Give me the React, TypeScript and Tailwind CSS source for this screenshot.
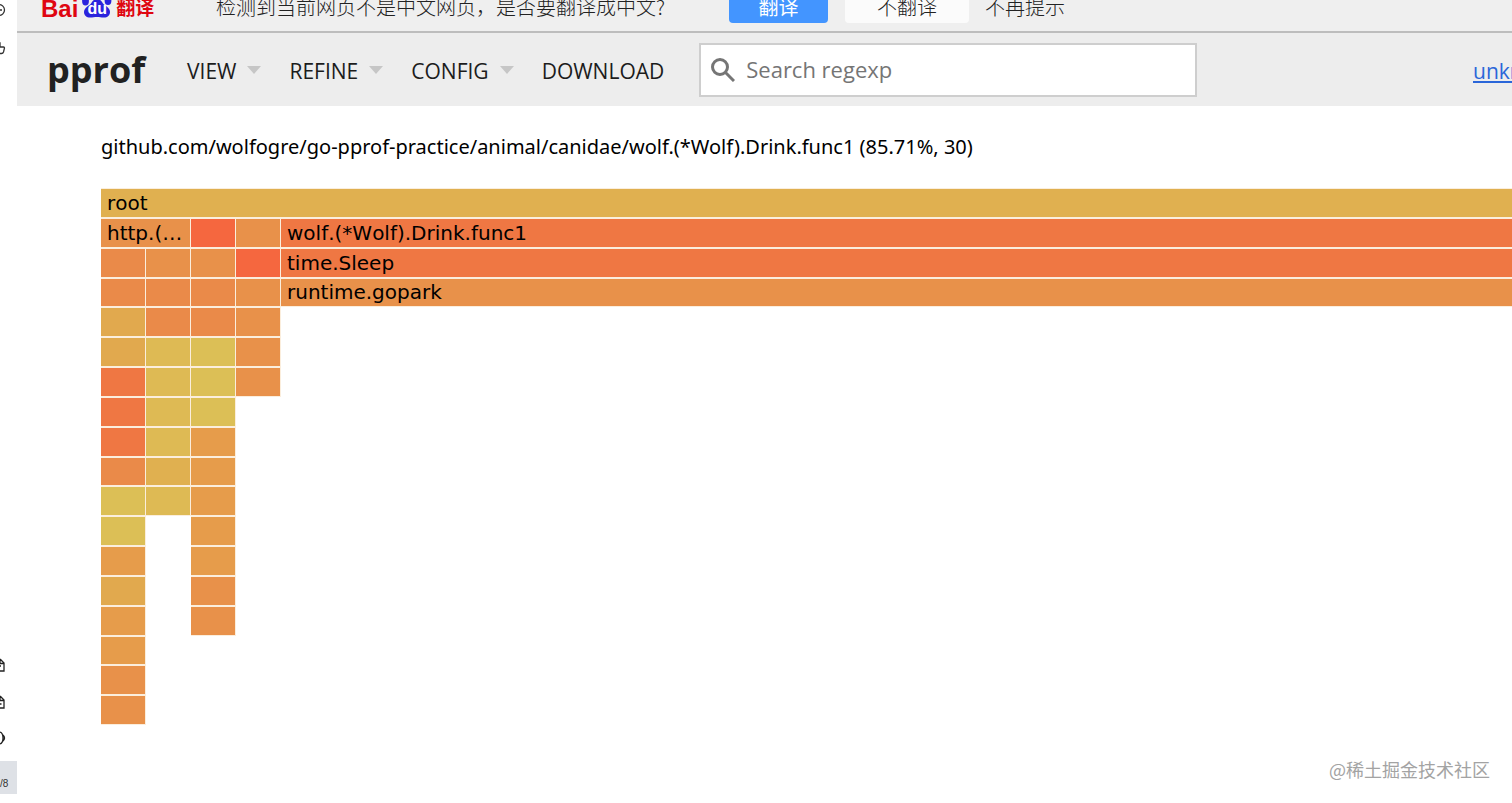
import { clsx } from "clsx";
import React from "react";

type Cell = { color: string; label?: string; span?: string } | null;

const gold = "bg-[#e0b050]";
const sand = "bg-[#e1a94e]";
const olive = "bg-[#deba54]";
const lime = "bg-[#dcbf56]";
const amber = "bg-[#e69c4b]";
const orange = "bg-[#e8914a]";
const rust = "bg-[#ea8a49]";
const coral = "bg-[#ef7743]";
const red = "bg-[#f5673f]";

const c = (color: string, label?: string, span?: string): Cell => ({
  color,
  label,
  span,
});

const stacks: Cell[][] = [
  [c(gold, "root", "col-span-5")],
  [
    c(orange, "http.(…", "col-span-2"),
    c(red),
    c(orange),
    c(coral, "wolf.(*Wolf).Drink.func1"),
  ],
  [c(rust), c(orange), c(orange), c(red), c(coral, "time.Sleep")],
  [c(rust), c(rust), c(rust), c(orange), c(orange, "runtime.gopark")],
  [c(sand), c(rust), c(rust), c(orange)],
  [c(sand), c(olive), c(lime), c(orange)],
  [c(coral), c(olive), c(lime), c(orange)],
  [c(coral), c(olive), c(lime)],
  [c(coral), c(olive), c(amber)],
  [c(rust), c(gold), c(amber)],
  [c(lime), c(olive), c(amber)],
  [c(lime), null, c(amber)],
  [c(amber), null, c(amber)],
  [c(sand), null, c(orange)],
  [c(amber), null, c(orange)],
  [c(amber)],
  [c(orange)],
  [c(orange)],
];

const FlameGraph = () => {
  return (
    <div className="-mr-px grid h-[537px] auto-rows-fr font-['DejaVu_Sans',sans-serif] text-xl text-black [font-kerning:none]">
      {stacks.map((row, i) => (
        <div key={i} className="grid grid-cols-[45px_45px_45px_45px_1fr]">
          {row.map((cell, j) =>
            cell ? (
              <div
                key={j}
                className={clsx(
                  "flex items-center overflow-hidden whitespace-nowrap border-y border-r border-[#fbeedd] px-[6px]",
                  cell.color,
                  cell.span
                )}
              >
                {cell.label}
              </div>
            ) : (
              <div key={j} />
            )
          )}
        </div>
      ))}
    </div>
  );
};

const BaiduLogo = () => {
  return (
    <div className="flex w-[175px] items-end pb-[5px] font-['Liberation_Sans','Noto_Sans_CJK_SC',sans-serif] font-bold text-[#df0611]">
      <span className="text-2xl leading-[18px]">Bai</span>
      <span className="relative ml-1 mr-1 h-7 w-[30px]">
        <svg viewBox="0 0 30 28" className="h-7 w-[30px] fill-[#2a24dd]">
          <ellipse cx="3.500" cy="11" rx="3.400" ry="4.500" />
          <ellipse cx="10.500" cy="5" rx="3.400" ry="4.500" />
          <ellipse cx="19" cy="5" rx="3.400" ry="4.500" />
          <ellipse cx="26" cy="10.500" rx="3.400" ry="4.500" />
          <path d="M15 9c-3 0-4.500 2-6 4.500C7 16 2 17.500 2 22c0 3.500 2.500 5.500 6 5.500 3 0 4.500-.5 7-.5s4 .5 7 .5c3.500 0 6-2 6-5.500 0-4.500-5-6-7-8.500C19.500 11 18 9 15 9z" />
        </svg>
        <span className="absolute inset-x-0 bottom-0 text-center text-base leading-[18px] text-white">
          du
        </span>
      </span>
      <span className="text-[19px] leading-[18px]">翻译</span>
    </div>
  );
};

const TranslateBar = () => {
  return (
    <div className="flex h-[33px] items-end overflow-hidden whitespace-nowrap border-b-2 border-[#bdbdbd] bg-[#efefef] pb-2 pl-6 font-['Noto_Sans_CJK_SC',sans-serif] text-xl leading-8 text-[#222]">
      <BaiduLogo />
      <p className="w-[513px] font-light">
        检测到当前网页不是中文网页，是否要翻译成中文?
      </p>
      <button className="h-8 w-[99px] rounded bg-[#4395ff] text-white">
        翻译
      </button>
      <button className="ml-[17px] h-8 w-[124px] rounded bg-[#fbfbfb] font-light">
        不翻译
      </button>
      <button className="ml-4 h-8 font-light">不再提示</button>
    </div>
  );
};

const MenuItem = ({ children }: { children: React.ReactNode }) => {
  return (
    <button className="flex items-center gap-[11px]">
      {children}
      <svg viewBox="0 0 14 8" className="mb-1 h-2 w-[14px] fill-[#c6c6c6]">
        <path d="M0 0h14L7 8z" />
      </svg>
    </button>
  );
};

const Header = () => {
  return (
    <header className="flex h-[73px] items-center whitespace-nowrap bg-[#ededed] pl-[30px] text-[21px] text-[#1c1c1c]">
      <h1 className="w-[140px] text-[36px] font-bold leading-[48px] text-[#212121]">
        pprof
      </h1>
      <nav className="flex items-center gap-7 pt-1">
        <MenuItem>VIEW</MenuItem>
        <MenuItem>REFINE</MenuItem>
        <MenuItem>CONFIG</MenuItem>
        <button>DOWNLOAD</button>
      </nav>
      <label className="ml-[35px] flex h-[54px] w-[498px] items-center gap-[11px] border-2 border-[#cecece] bg-white pl-[10px]">
        <svg
          viewBox="0 0 24 24"
          className="h-6 w-6 shrink-0 fill-none stroke-[#757575]"
          strokeWidth="3"
        >
          <circle cx="9" cy="9" r="7.500" />
          <path d="M14.500 14.500l8.500 8.500" />
        </svg>
        <input
          type="text"
          aria-label="Search regexp"
          placeholder="Search regexp"
          className="w-full text-[22px] outline-none placeholder:text-[#757575]"
        />
      </label>
      <a
        href="#"
        className="ml-auto w-[39px] overflow-hidden pt-1 text-[#2a66d9] underline underline-offset-2"
      >
        unknown
      </a>
    </header>
  );
};

const Sidebar = () => {
  return (
    <aside className="flex w-[17px] flex-col overflow-hidden">
      <svg
        viewBox="0 0 17 60"
        className="h-[60px] w-[17px] fill-none stroke-[#333]"
        strokeWidth="1.300"
      >
        <circle cx="-1" cy="10" r="5.500" />
        <path d="M-2 10h4M-1 43h1v4h3.500q1 0 1 1l-1 4q-.5 1.500-2 1.500H-3" />
      </svg>
      <svg
        viewBox="0 0 17 100"
        className="mt-auto h-[100px] w-[17px] fill-none stroke-[#222]"
        strokeWidth="1.300"
      >
        <path d="M-3 2.500h3.500l3.500 3.500v8h-7M0 3v3.500h3.500M-2 9h3" />
        <path d="M-3 39.500h3.500l3.500 3.500v8h-7M0 40v3.500h3.500M-2 47h3.500" />
        <path d="M-1 75q4 0 4 6t-4 6M3 78q3 3 0 6" />
      </svg>
      <div className="mb-[9px] mt-1 flex h-[33px] items-end bg-[#dee1e6] pb-1 font-['Liberation_Sans',sans-serif] text-[10px] leading-3 text-[#333]">
        /8
      </div>
    </aside>
  );
};

export default function App() {
  return (
    <div className="flex min-h-screen overflow-hidden bg-white font-['Open_Sans','Noto_Sans_CJK_SC',sans-serif]">
      <Sidebar />
      <div className="flex min-w-0 flex-1 flex-col">
        <TranslateBar />
        <Header />
        <main className="pl-[84px] pt-[25px]">
          <p className="mb-[25px] font-['Noto_Sans',sans-serif] text-xl leading-8 text-black">
            github.com/wolfogre/go-pprof-practice/animal/canidae/wolf.(*Wolf).Drink.func1
            (85.71%, 30)
          </p>
          <FlameGraph />
        </main>
        <p className="mb-[22px] mr-[22px] mt-auto self-end font-['Noto_Sans_CJK_SC',sans-serif] text-lg leading-6 text-[#a3a3a3]">
          @稀土掘金技术社区
        </p>
      </div>
    </div>
  );
}
